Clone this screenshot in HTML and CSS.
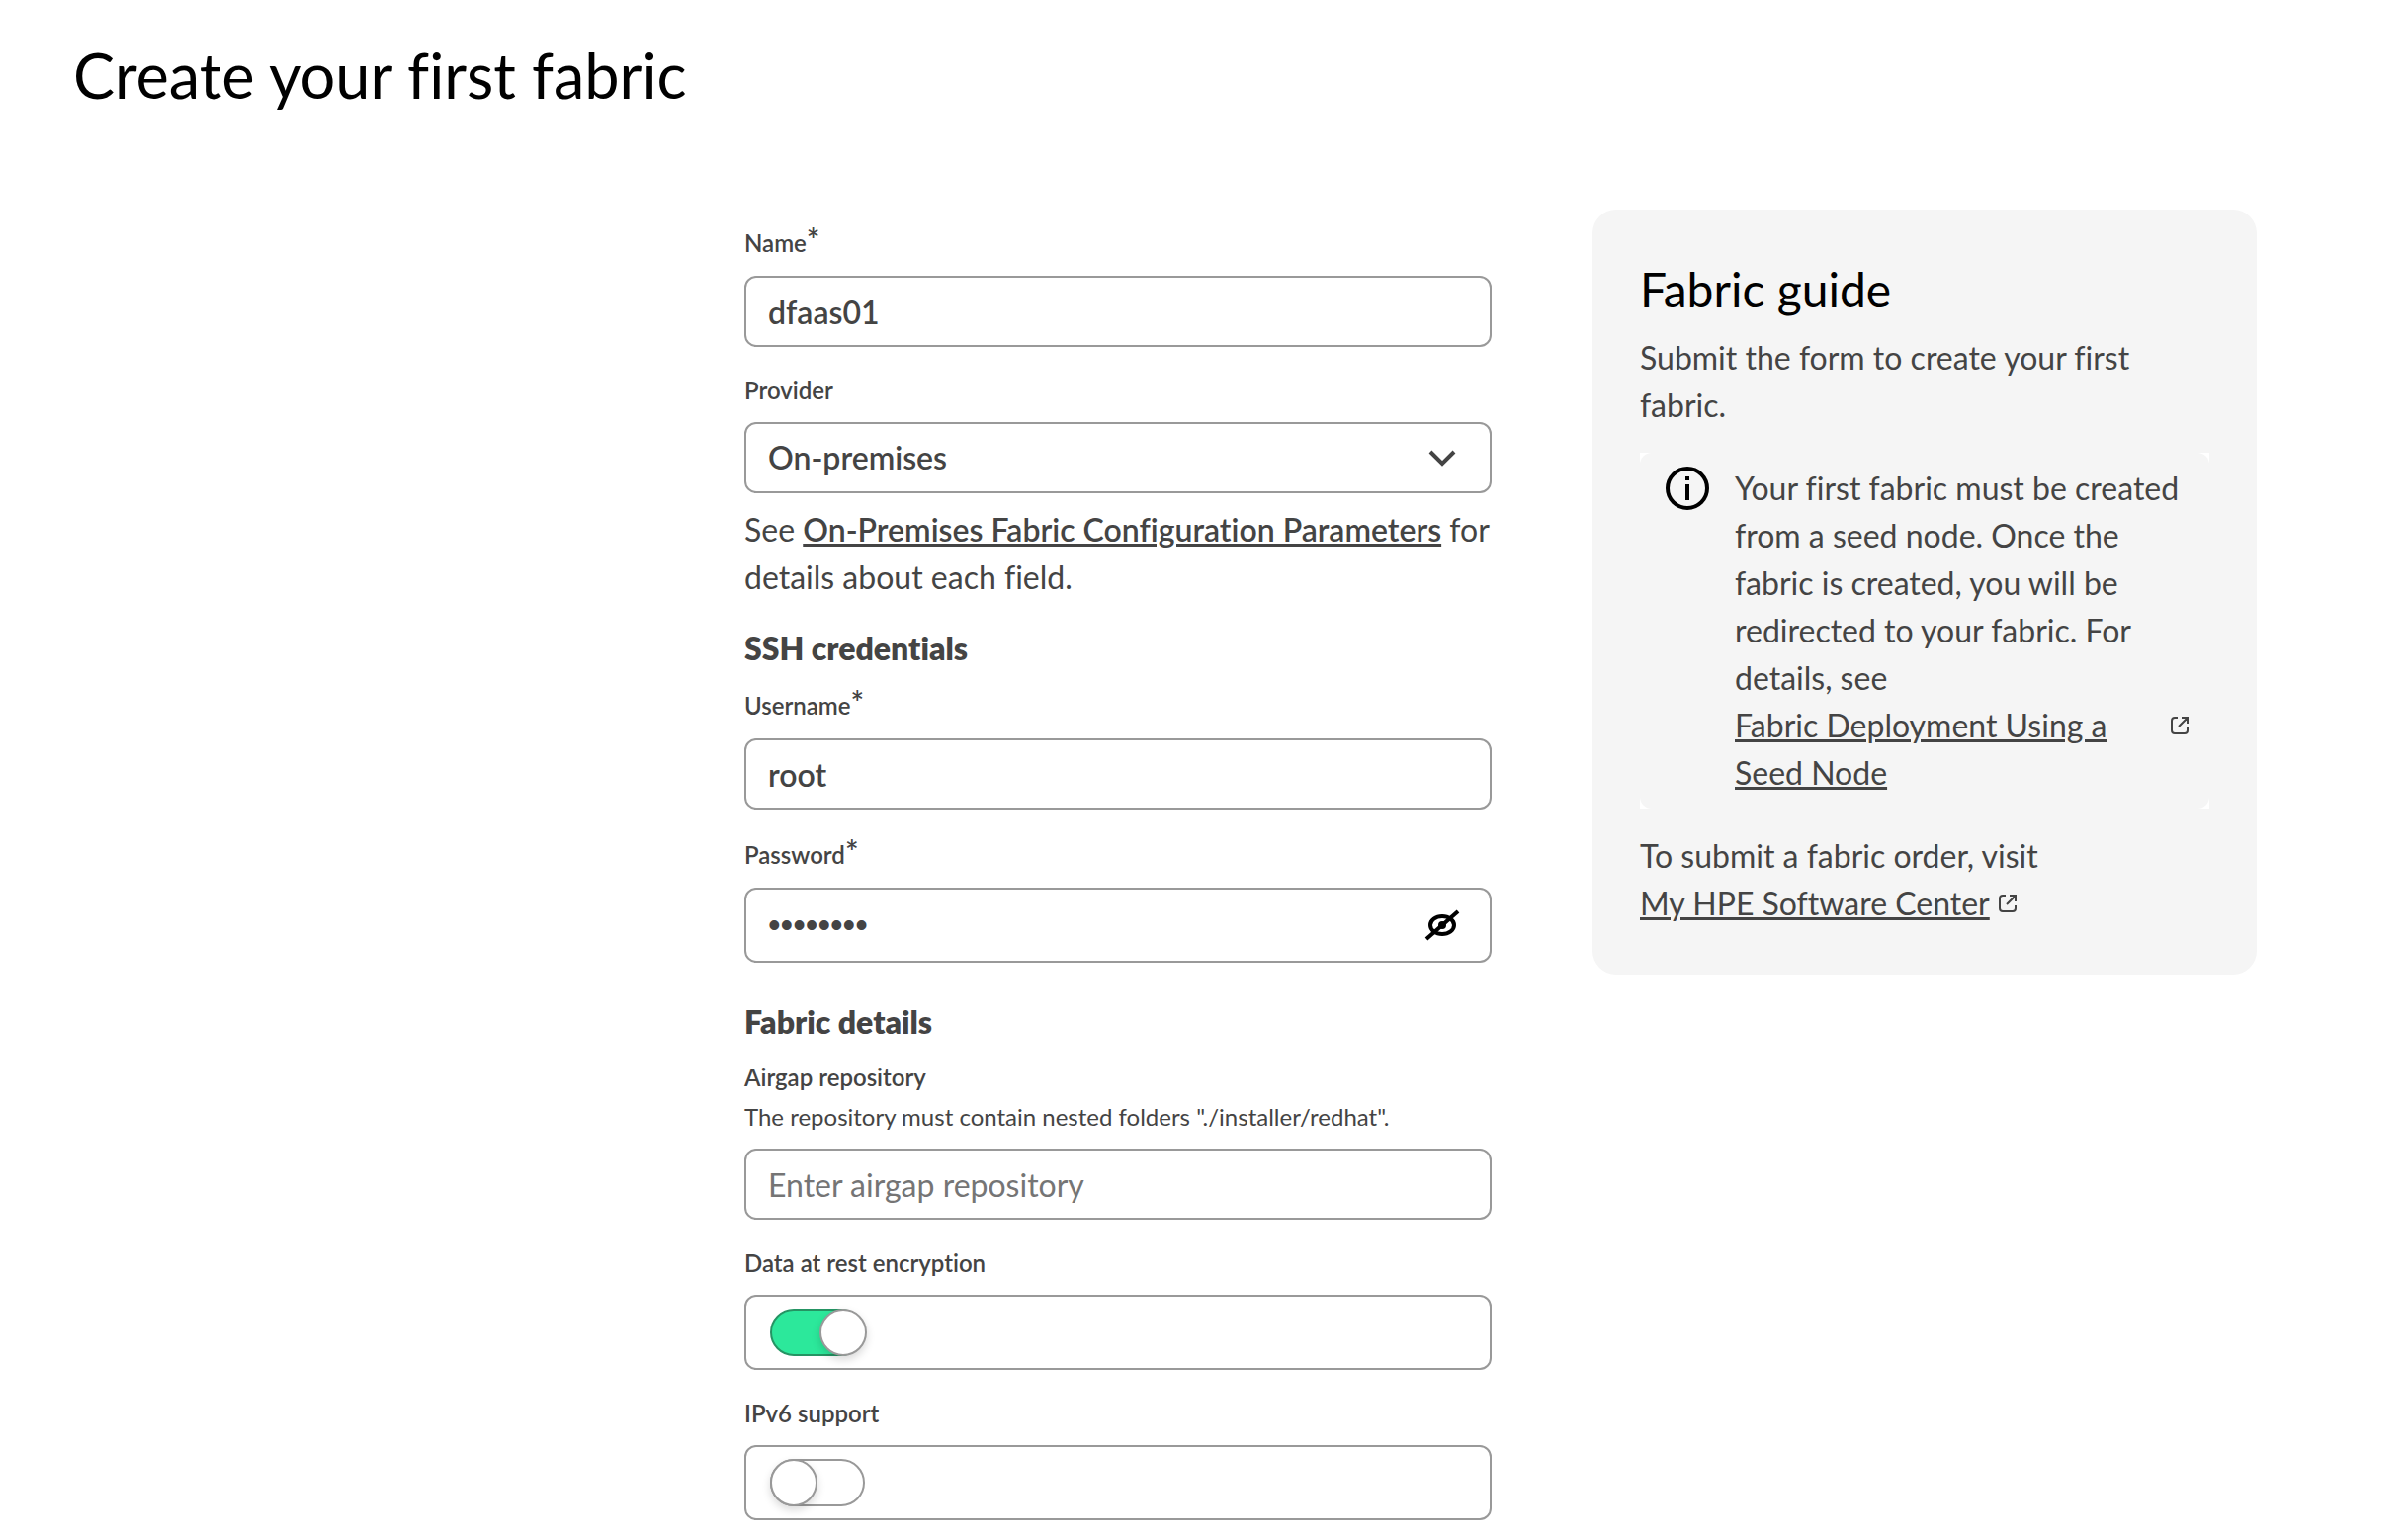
FILE: index.html
```html
<!DOCTYPE html>
<html lang="en">
<head>
<meta charset="utf-8">
<meta name="viewport" content="width=device-width, initial-scale=1">
<title>Create your first fabric</title>
<link rel="stylesheet" href="styles.css">
</head>
<body>
<header class="page-header">
  <h1 class="page-title">Create your first fabric</h1>
</header>
<main class="layout">
  <form class="form">
    <div class="field">
      <label class="label label-required" for="name">Name<span class="required">*</span></label>
      <input class="control" id="name" type="text" value="dfaas01" required>
    </div>
    <div class="field">
      <label class="label" for="provider">Provider</label>
      <div class="control-wrap">
        <select class="control" id="provider">
          <option>On-premises</option>
        </select>
        <svg class="control-icon chevron" viewBox="0 0 48 48" aria-hidden="true"><path d="M12 18l12 12 12-12"/></svg>
      </div>
    </div>
    <p class="help">See <a class="link link-strong" href="#parameters">On-Premises Fabric Configuration Parameters</a> for details about each field.</p>

    <h2 class="section-title">SSH credentials</h2>
    <div class="field">
      <label class="label label-required" for="username">Username<span class="required">*</span></label>
      <input class="control" id="username" type="text" value="root" required>
    </div>
    <div class="field">
      <label class="label label-required" for="password">Password<span class="required">*</span></label>
      <div class="control-wrap">
        <input class="control control-password" id="password" type="password" value="password" required>
        <button class="control-icon reveal" type="button" aria-label="Show password">
          <svg viewBox="0 0 48 48" aria-hidden="true"><ellipse cx="24" cy="24" rx="12" ry="9"/><circle class="pupil" cx="24" cy="24" r="4"/><path d="M8 38L40 10"/></svg>
        </button>
      </div>
    </div>

    <h2 class="section-title section-title-spaced">Fabric details</h2>
    <div class="field">
      <label class="label label-with-hint" for="airgap">Airgap repository</label>
      <p class="hint" id="airgap-hint">The repository must contain nested folders "./installer/redhat".</p>
      <input class="control" id="airgap" type="text" placeholder="Enter airgap repository" aria-describedby="airgap-hint">
    </div>
    <div class="field">
      <label class="label" for="encryption">Data at rest encryption</label>
      <div class="switch-box"><input class="switch" id="encryption" type="checkbox" checked></div>
    </div>
    <div class="field">
      <label class="label" for="ipv6">IPv6 support</label>
      <div class="switch-box"><input class="switch" id="ipv6" type="checkbox"></div>
    </div>
  </form>

  <aside class="guide">
    <h2 class="guide-title">Fabric guide</h2>
    <p class="guide-text">Submit the form to create your first fabric.</p>
    <div class="notice-frame">
      <div class="notice">
        <svg class="info-icon" viewBox="0 0 48 48" aria-hidden="true"><circle cx="24" cy="24" r="20"/><path d="M24 20v16M24 12v4"/></svg>
        <div class="notice-body">
          <p class="notice-text">Your first fabric must be created from a seed node. Once the fabric is created, you will be redirected to your fabric. For details, see</p>
          <a class="ext-link" href="#seed-node"><span class="link">Fabric Deployment Using a Seed Node</span><svg class="ext-icon" viewBox="0 0 24 24" aria-hidden="true"><path d="M10 4H7a3 3 0 0 0-3 3v10a3 3 0 0 0 3 3h10a3 3 0 0 0 3-3v-3M14 4h6v6M20 4l-9 9"/></svg></a>
        </div>
      </div>
    </div>
    <p class="guide-text">To submit a fabric order, visit</p>
    <a class="ext-link" href="#software-center"><span class="link">My HPE Software Center</span><svg class="ext-icon" viewBox="0 0 24 24" aria-hidden="true"><path d="M10 4H7a3 3 0 0 0-3 3v10a3 3 0 0 0 3 3h10a3 3 0 0 0 3-3v-3M14 4h6v6M20 4l-9 9"/></svg></a>
  </aside>
</main>
</body>
</html>
```
FILE: styles.css
```css
*, *::before {
  box-sizing: border-box;
}

body {
  margin: 0;
  background: #fff;
  color: #444;
  font-family: Lato, "Liberation Sans", sans-serif;
  font-size: 32px;
  font-variant-ligatures: none;
  line-height: 48px;
}

h1, h2, p {
  margin: 0;
}

.page-header {
  padding: 36px 74px 0;
}

.page-title {
  color: #000;
  font-size: 63px;
  font-weight: 400;
  line-height: 80px;
}

.layout {
  display: grid;
  grid-template-columns: 651fr 756fr 672fr;
  column-gap: 102px;
  align-items: start;
  padding: 96px 153px 20px 0;
}

/* Form */

.form {
  grid-column: 2;
  padding-top: 14px;
}

.field + .field {
  margin-top: 26px;
}

.label {
  display: block;
  margin-bottom: 14px;
  font-size: 24px;
  font-weight: 600;
  line-height: 36px;
}

.label-required {
  line-height: 39px;
}

.label-with-hint {
  margin-bottom: 4px;
}

.required {
  font-size: 32px;
  line-height: 24px;
}

.hint {
  margin-bottom: 14px;
  font-size: 24px;
  line-height: 36px;
}

.control {
  display: block;
  width: 100%;
  height: 72px;
  margin: 0;
  padding: 0 22px;
  border: 2px solid #999;
  border-radius: 12px;
  background: #fff;
  color: #444;
  font: inherit;
  font-weight: 600;
  appearance: none;
}

.control::placeholder {
  color: #757575;
  font-weight: 400;
  opacity: 1;
}

.control-password {
  height: 76px;
  font-family: "Liberation Sans", Arial, sans-serif;
  font-size: 36px;
  font-weight: 400;
}

.control-wrap {
  display: grid;
  align-items: center;
}

.control-wrap > * {
  grid-area: 1 / 1;
}

.control-icon {
  justify-self: end;
  width: 48px;
  height: 48px;
  margin-right: 26px;
}

.control-icon path,
.control-icon ellipse {
  fill: none;
  stroke: currentColor;
  stroke-width: 4;
}

.chevron {
  pointer-events: none;
}

.reveal {
  padding: 0;
  border: 0;
  background: none;
  color: #000;
}

.reveal svg {
  display: block;
}

.help {
  margin: 13px 0 24px;
}

.link {
  color: inherit;
  text-decoration: underline;
  text-decoration-thickness: 3px;
}

.link-strong {
  font-weight: 600;
}

.section-title {
  margin-bottom: 14px;
  font-size: 32px;
  font-weight: 800;
  line-height: 48px;
}

.section-title-spaced {
  margin-top: 36px;
}

.switch-box {
  display: flex;
  padding: 12px 24px;
  border: 2px solid #999;
  border-radius: 12px;
}

.switch {
  width: 96px;
  height: 48px;
  margin: 0;
  border: 2px solid #999;
  border-radius: 24px;
  background: #fff;
  appearance: none;
}

.switch::before {
  content: "";
  display: block;
  width: 48px;
  height: 48px;
  margin: -2px;
  border: 2px solid #999;
  border-radius: 50%;
  background: #fff;
  box-shadow: 0 4px 8px rgba(0, 0, 0, 0.15);
}

.switch:checked {
  border-color: #259463;
  background: #2ce89b;
}

.switch:checked::before {
  margin-left: 48px;
}

/* Guide */

.guide {
  padding: 48px;
  border-radius: 24px;
  background: #f5f5f5;
}

.guide-title {
  margin-bottom: 12px;
  color: #000;
  font-size: 48px;
  font-weight: 400;
  line-height: 66px;
}

.notice-frame {
  margin: 24px 0;
  background: #fff;
}

.notice {
  display: flex;
  gap: 24px;
  padding: 12px 18px 12px 24px;
  border-radius: 12px;
  background: #f5f5f5;
}

.info-icon {
  flex: none;
  width: 48px;
  height: 48px;
  fill: none;
  stroke: #000;
  stroke-width: 4;
}

.notice-body {
  flex: 1;
}

.ext-link {
  display: flex;
  gap: 6px;
  color: inherit;
  text-decoration: none;
}

.ext-icon {
  flex: none;
  width: 24px;
  height: 24px;
  margin-top: 12px;
  fill: none;
  stroke: currentColor;
  stroke-width: 2;
}
```
